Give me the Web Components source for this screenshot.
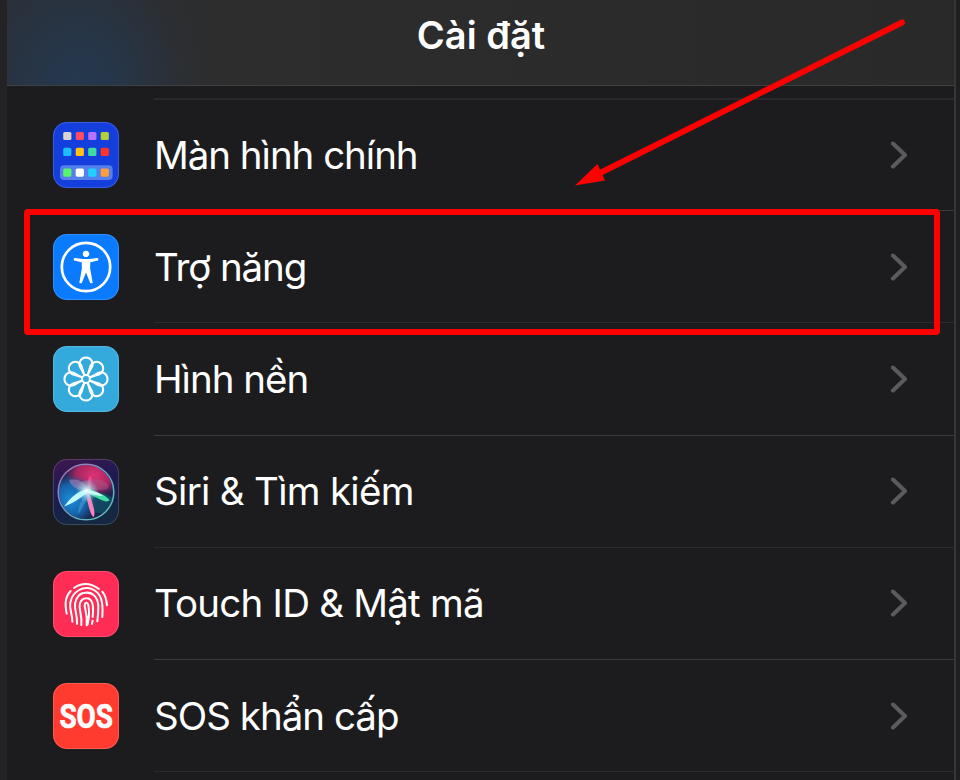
<!DOCTYPE html>
<html lang="vi">
<head>
<meta charset="utf-8">
<title>Cài đặt</title>
<style>
  body {
    margin: 0;
    background: #222322;
    font-family: Inter, "Liberation Sans", sans-serif;
    overflow: hidden;
  }
</style>
</head>
<body>
<settings-screen>
  <settings-header slot="header">Cài đặt</settings-header>
  <settings-row icon="home" spacing="-1.03">Màn hình chính</settings-row>
  <settings-row icon="access" spacing="-1.1">Trợ năng</settings-row>
  <settings-row icon="wallpaper" spacing="-1">Hình nền</settings-row>
  <settings-row icon="siri" spacing="-.7">Siri &amp; Tìm kiếm</settings-row>
  <settings-row icon="touch" spacing="-.78">Touch ID &amp; Mật mã</settings-row>
  <settings-row icon="sos" spacing="-.98">SOS khẩn cấp</settings-row>
  <red-marks slot="marks"></red-marks>
</settings-screen>

<script>
const dots = (y, colors) => colors.map((c, i) =>
  `<rect x="${10.2 + i * 12.5}" y="${y}" width="8.2" height="8.2" rx="1.6" fill="${c}"/>`).join('');

const petals = [0, 45, 90, 135, 180, 225, 270, 315].map((a) =>
  `<path transform="rotate(${a} 33 33)" d="M31.6 29.2L27 20.8A6.6 6.6 0 1 1 39 20.8L34.4 29.2"/>`).join('');

const icons = {
  home: `
    <rect width="66" height="66" rx="14" fill="#143fdc"/>
    ${dots(9.9, ['#d8d6cc', '#ff4d62', '#b870ff', '#b2d235'])}
    ${dots(25.8, ['#1cbcff', '#ffc20e', '#3ddca0', '#ff3328'])}
    <rect x="7" y="43.2" width="52.6" height="14.8" rx="4" fill="#5580ea"/>
    ${dots(46.5, ['#58f470', '#fff', '#20d0ff', '#ff9c3c'])}`,

  access: `
    <rect width="66" height="66" rx="14" fill="#0a7aff"/>
    <circle cx="33" cy="33" r="24.2" fill="none" stroke="#fff" stroke-width="2.7"/>
    <g fill="#fff" stroke="#fff" stroke-linejoin="round" stroke-linecap="round">
      <circle cx="33" cy="19.9" r="2.8"/>
      <path stroke-width="1.3" d="M21.4 24.6L29.5 25.6H36.5L44.6 24.6V25.9L36.6 27.9L36.5 34.5L39 48.6H37.7L33.6 38.2H32.4L28.3 48.6H27L29.5 34.5L29.4 27.9L21.4 25.9Z"/>
    </g>`,

  wallpaper: `
    <rect width="66" height="66" rx="14" fill="#34aadc"/>
    <g fill="none" stroke="#fff" stroke-width="2" stroke-linejoin="round">
      ${petals}
      <circle cx="33" cy="33" r="3.9"/>
    </g>`,

  siri: `
    <defs>
      <linearGradient id="back" x1="0" y1="0" x2=".3" y2="1"><stop stop-color="#42164f"/><stop offset=".5" stop-color="#1b1b50"/><stop offset="1" stop-color="#152741"/></linearGradient>
      <linearGradient id="ring" x1="0" y1="0" x2="1" y2="1"><stop stop-color="#ad6cb4"/><stop offset=".5" stop-color="#6f9bc5"/><stop offset="1" stop-color="#58c9b5"/></linearGradient>
      <radialGradient id="pink"><stop stop-color="#dc3375"/><stop offset=".6" stop-color="#c02664" stop-opacity=".85"/><stop offset="1" stop-color="#8a1f5c" stop-opacity="0"/></radialGradient>
      <radialGradient id="blue"><stop stop-color="#1a8fdc"/><stop offset=".6" stop-color="#1668b0" stop-opacity=".9"/><stop offset="1" stop-color="#1060a0" stop-opacity="0"/></radialGradient>
      <radialGradient id="glow"><stop stop-color="#fff"/><stop offset=".3" stop-color="#cffcff" stop-opacity=".7"/><stop offset="1" stop-color="#7adfe8" stop-opacity="0"/></radialGradient>
      <clipPath id="ball"><circle cx="33" cy="33" r="27"/></clipPath>
      <filter id="soft" x="-30%" y="-30%" width="160%" height="160%"><feGaussianBlur stdDeviation=".7"/></filter>
    </defs>
    <rect width="66" height="66" rx="14" fill="url(#back)"/>
    <circle cx="33" cy="33" r="28" fill="#19234c"/>
    <g clip-path="url(#ball)">
      <ellipse cx="41" cy="16" rx="30" ry="23" fill="url(#pink)"/>
      <ellipse cx="18" cy="41" rx="26" ry="26" fill="url(#blue)"/>
      <ellipse cx="47" cy="44" rx="14" ry="10" fill="#116a75" opacity=".5" filter="url(#soft)"/>
      <g filter="url(#soft)">
        <path d="M16 21C26 19 33 24 35 33C26 32 18 28 16 21Z" fill="#b08fc4" opacity=".5"/>
        <path d="M35 33C34 23 35 17 38 17C40 22 38 29 35 33Z" fill="#f24b91" opacity=".85"/>
        <path d="M20 27C34 18 52 18 56 28C55 32 45 31 35 32Z" fill="#a77aa8" opacity=".3"/>
        <path d="M11 47.5C19 37 27 30 38 30C31 37 21 44 11 47.5Z" fill="#c4fbff"/>
        <path d="M35 30.5C42 31 54 37 56.5 41C54 45.5 43 38 33 33.5Z" fill="#3be0a4"/>
        <path d="M36 31.5C42 32 46 34 50 37C46 37 41 36 35 34Z" fill="#d8fff4"/>
        <path d="M33 34C34 41 37 56 40.5 58C43.5 54 39 43 36 33Z" fill="#f584be"/>
        <path d="M25 55C26 45 29 39 34 33L36 37C32 43 29 50 25 55Z" fill="#4d9fe0" opacity=".55"/>
      </g>
      <circle cx="34" cy="32" r="11.5" fill="url(#glow)"/>
    </g>
    <circle cx="33" cy="33" r="27.8" fill="none" stroke="url(#ring)" stroke-width="1.5"/>`,

  // drawn on a 3x grid
  touch: `
    <rect width="66" height="66" rx="14" fill="#ff2d55"/>
    <g transform="scale(.3333) translate(-39 -37)" fill="none" stroke="#fff" stroke-width="6" stroke-linecap="round">
      <path d="M102 88Q138 63 177 91"/>
      <path d="M92 97C74 116 75 138 80 165"/>
      <path d="M187 99Q199 114 201 140"/>
      <path d="M97 189C98 165 87 153 91 132C97 98 130 80 158 92C184 103 190 130 187 175"/>
      <path d="M111 196C113 167 101 152 106 131C110 115 119 106 129 103"/>
      <path d="M132 103C158 97 174 117 175 143C175 160 174 174 172 188"/>
      <path d="M124 199C127 167 115 151 120 134C126 115 151 113 157 134C161 148 159 160 158 175"/>
      <path d="M158 186L156 196"/>
      <path d="M140 200C143 172 138 160 134 143C134 130 143 129 145 140C149 159 147 178 143 197"/>
    </g>`,

  sos: `
    <rect width="66" height="66" rx="14" fill="#ff3b30"/>
    <text x="33.2" y="45" fill="#fff" stroke="#fff" stroke-width=".7" font-family="Roboto" font-weight="700" font-size="34"
      text-anchor="middle" textLength="53.5" lengthAdjust="spacingAndGlyphs">SOS</text>`
};

class SettingsScreen extends HTMLElement {
  constructor() {
    super();
    this.attachShadow({ mode: 'open' });
    this.shadowRoot.innerHTML = `
      <style>
        :host {
          display: block;
          box-sizing: border-box;
          position: relative;
          width: 960px;
          height: 780px;
          padding: 0 4px 0 7px;
          background: linear-gradient(90deg, #232323 7px, #1e2020 7px);
          overflow: hidden;
        }
        main {
          box-sizing: border-box;
          height: 780px;
          background: #1c1c1e;
          border-right: 2px solid #353637;
        }
        .list {
          padding-top: 12px;
        }
        .list::before {
          content: "";
          display: block;
          height: 2px;
          margin: 0 0 -1px 147px;
          background: #29292b;
        }
      </style>
      <main>
        <slot name="header"></slot>
        <div class="list"><slot></slot></div>
      </main>
      <slot name="marks"></slot>
    `;
  }
}

class SettingsHeader extends HTMLElement {
  constructor() {
    super();
    this.attachShadow({ mode: 'open' });
    this.shadowRoot.innerHTML = `
      <style>
        :host {
          display: flex;
          box-sizing: border-box;
          justify-content: center;
          height: 86px;
          padding: 11px 0 0 1px;
          border-bottom: 1px solid #404041;
          background:
            radial-gradient(ellipse 125px 150px at 72px 88px, #25384f, rgba(37, 56, 79, .85) 25%, rgba(37, 56, 79, .45) 55%, rgba(37, 56, 79, .12) 82%, transparent),
            linear-gradient(90deg, #2b2f36, #2c2e31 130px, #2d2d2e 220px, #2b2b2c 600px, #29292a);
          color: #fff;
          font-size: 38px;
          font-weight: 600;
          line-height: 48px;
        }
      </style>
      <span><slot></slot></span>
    `;
  }
}

class SettingsRow extends HTMLElement {
  constructor() {
    super();
    this.attachShadow({ mode: 'open' });
  }

  connectedCallback() {
    this.shadowRoot.innerHTML = `
      <style>
        :host {
          --line: #3a3a3c;
          display: flex;
          align-items: stretch;
          height: 112.2px;
          padding-left: 46px;
          color: #fff;
          font-size: 38.5px;
          font-weight: 400;
        }
        :host(:nth-of-type(even)) {
          --line: #2c2c2e;
        }
        .icon {
          align-self: center;
          flex: none;
          width: 66px;
          height: 66px;
          overflow: visible;
        }
        .body {
          display: flex;
          flex: 1;
          box-sizing: border-box;
          align-items: center;
          justify-content: space-between;
          margin-left: 35px;
          padding-right: 46.5px;
          border-bottom: 1px solid var(--line);
        }
        .label {
          letter-spacing: ${this.getAttribute('spacing')}px;
          white-space: nowrap;
        }
      </style>
      <svg class="icon" viewBox="0 0 66 66">
        ${icons[this.getAttribute('icon')]}
        <rect x=".4" y=".4" width="65.2" height="65.2" rx="13.6" fill="none" stroke="#fff" stroke-opacity=".22" stroke-width=".8"/>
      </svg>
      <div class="body">
        <span class="label"><slot></slot></span>
        <svg width="18" height="28" viewBox="0 0 18 28" fill="none" stroke="#5b5b5e" stroke-width="4" stroke-linecap="round" stroke-linejoin="round"><path d="M3 2.5L15 14L3 25.5"/></svg>
      </div>
    `;
  }
}

// frame around one row and the arrow that points at it
class RedMarks extends HTMLElement {
  constructor() {
    super();
    this.attachShadow({ mode: 'open' });
    this.shadowRoot.innerHTML = `
      <style>
        :host {
          display: block;
          position: absolute;
          inset: 0;
          pointer-events: none;
        }
      </style>
      <svg width="960" height="780" fill="none" stroke="#f00">
        <rect x="27" y="212" width="910" height="120" rx="1" stroke-width="6" stroke-linejoin="round"/>
        <path d="M902 22.5L598 174" stroke-width="6" stroke-linecap="round"/>
        <path d="M575 185.5L597.5 164L605 180.5Z" fill="#f00" stroke="none"/>
      </svg>
    `;
  }
}

customElements.define('settings-screen', SettingsScreen);
customElements.define('settings-header', SettingsHeader);
customElements.define('settings-row', SettingsRow);
customElements.define('red-marks', RedMarks);
</script>
</body>
</html>
